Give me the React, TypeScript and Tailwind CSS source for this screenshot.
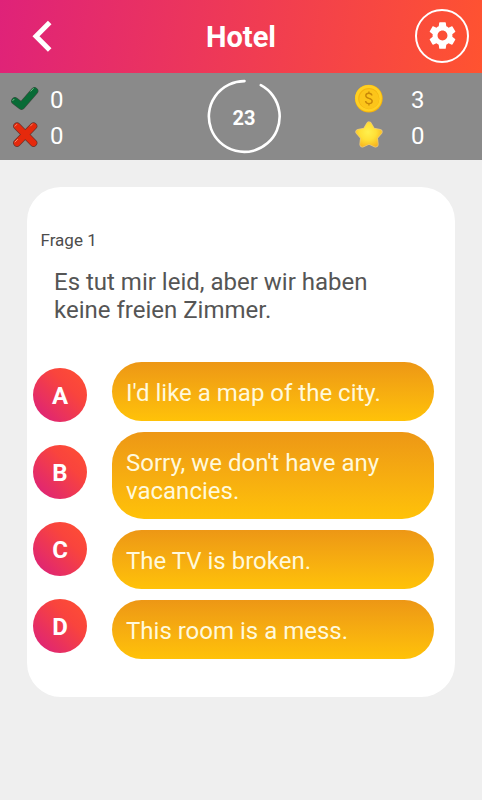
import React from "react"

import { MdSettings } from "react-icons/md"

const answers = [
  { letter: "A", text: "I'd like a map of the city." },
  { letter: "B", text: "Sorry, we don't have any vacancies." },
  { letter: "C", text: "The TV is broken." },
  { letter: "D", text: "This room is a mess." },
]

export default function App() {
  return (
    <div className="h-[800px] w-[482px] overflow-hidden bg-[#efefef] font-['Roboto',sans-serif]">
      <header className="flex h-[73px] items-center justify-between bg-linear-[100deg,#df2279,#ff5330] pr-[13px] pl-8">
        <button className="mb-[2px] h-[34px] w-[60px]" aria-label="Back">
          <svg width="22" height="34" viewBox="0 0 22 34" fill="none">
            <path d="M17.7 3.5L4 17.3L17.7 31" stroke="#fff" strokeWidth="5" />
          </svg>
        </button>
        <h1 className="mr-[25px] pt-px text-[29px] font-bold leading-9 text-white">Hotel</h1>
        <button
          className="mb-[2px] flex h-[54px] w-[54px] items-center justify-center rounded-full border-[2.5px] border-white text-white"
          aria-label="Settings"
        >
          <MdSettings size={33} />
        </button>
      </header>

      <section className="flex h-[87px] justify-between bg-[#8a8a8a] text-white">
        <div className="w-[132px] pt-2 pl-[10px]">
          <Stat icon={<CheckIcon />} value={0} gap="gap-[10px]" />
          <Stat icon={<CrossIcon />} value={0} gap="gap-[10px]" />
        </div>
        <Timer seconds={23} />
        <div className="w-[128px] pt-2">
          <Stat icon={<CoinIcon />} value={3} gap="gap-[27px]" />
          <Stat icon={<StarIcon />} value={0} gap="gap-[27px]" />
        </div>
      </section>

      <main className="mx-[27px] mt-[27px] h-[510px] rounded-[34px] bg-white pt-[43px]">
        <p className="pl-[13.5px] text-[17px] leading-5 text-[#4c4c4c]">Frage 1</p>
        <p className="mt-[18px] w-[360px] pl-[27px] text-2xl leading-7 text-[#555]">
          Es tut mir leid, aber wir haben keine freien Zimmer.
        </p>

        <div className="mt-[38px] flex pl-[6px]">
          <div className="flex flex-col gap-[23px] pt-[6px]">
            {answers.map(({ letter }) => (
              <span
                key={letter}
                className="flex h-[54px] w-[54px] items-center justify-center rounded-full bg-linear-[45deg,#d91e80,#f9443d_65%,#ff5033] pt-[2px] text-2xl font-bold text-white"
              >
                {letter}
              </span>
            ))}
          </div>
          <div className="ml-[25px] flex w-[322px] flex-col gap-[11px]">
            {answers.map(({ letter, text }) => (
              <button
                key={letter}
                className="rounded-[32px] bg-linear-to-b from-[#ed9715] to-[#ffc208] pt-[17px] pr-10 pb-[14px] pl-[14px] text-left text-2xl leading-7 text-[#fff9dc]"
              >
                {text}
              </button>
            ))}
          </div>
        </div>
      </main>
    </div>
  )
}

function Stat({ icon, value, gap }: { icon: React.ReactNode; value: number; gap: string }) {
  return (
    <div className={`flex h-9 items-center ${gap}`}>
      {icon}
      <span className="pt-[2px] text-2xl leading-7">{value}</span>
    </div>
  )
}

function Timer({ seconds }: { seconds: number }) {
  return (
    <div className="mt-[6px] ml-[2px] grid h-[75px] w-[75px] place-items-center">
      <svg className="col-start-1 row-start-1" width="75" height="75" viewBox="0 0 75 75" fill="none">
        <path
          d="M53.8 6.2A35.4 35.4 0 1 1 37.5 2.1"
          stroke="#fff"
          strokeWidth="2.6"
          strokeLinecap="round"
        />
      </svg>
      <span className="col-start-1 row-start-1 pt-[2px] text-xl font-bold leading-6">{seconds}</span>
    </div>
  )
}

function CheckIcon() {
  return (
    <svg width="30" height="30" viewBox="0 0 30 30" fill="none" strokeLinecap="round" strokeLinejoin="round">
      <path d="M5 17L11.5 22L24.5 7" stroke="#3b4c3f" strokeWidth="7.6" />
      <path d="M5 17L11.5 22L24.5 7" stroke="#086b36" strokeWidth="6.4" />
      <path d="M2.8 16.6L4 15.3M20.7 7.2L23.3 4.5" stroke="#7ebd87" strokeWidth="1" />
    </svg>
  )
}

function CrossIcon() {
  return (
    <svg width="30" height="30" viewBox="0 0 30 30" fill="none" strokeLinecap="round">
      <path d="M7 6.2L23.5 23M23.5 6.2L7 23" stroke="#6b332c" strokeWidth="7.6" />
      <path d="M7 6.2L23.5 23M23.5 6.2L7 23" stroke="#e5290c" strokeWidth="6.2" />
      <path d="M5 6.2L6.8 4.4M20.5 6L22.4 4M5 22L7.6 19.4" stroke="#f58a6c" strokeWidth="1" />
    </svg>
  )
}

function CoinIcon() {
  return (
    <svg width="30" height="30" viewBox="0 0 30 30">
      <circle cx="14.8" cy="14.6" r="13.9" fill="#f5b30c" />
      <circle cx="14.5" cy="14.2" r="13.3" fill="#ffd023" />
      <circle cx="14.8" cy="14.6" r="10.6" fill="#f5b50f" />
      <circle cx="15.1" cy="15" r="10" fill="#fcc51a" />
      <path
        d="M17.9 11.5C17.6 9.8 16.4 9.2 14.9 9.2C13.1 9.2 11.8 10.2 11.8 11.7C11.8 15.2 18.2 13.4 18.2 17.1C18.2 18.7 16.8 19.7 15 19.7C13.1 19.7 11.8 18.7 11.6 17M14.9 7.5V9.2M14.9 19.7V21.6"
        fill="none"
        stroke="#c98808"
        strokeWidth="1.4"
      />
    </svg>
  )
}

function StarIcon() {
  const points = "15,4.4 18.6,10.5 25.6,11.9 20.9,17.3 21.6,24.4 15,21.6 8.4,24.4 9.1,17.3 4.4,11.9 11.4,10.5"
  return (
    <svg width="30" height="30" viewBox="0 0 30 30" strokeLinejoin="round">
      <defs>
        <radialGradient id="star" gradientUnits="userSpaceOnUse" cx="14" cy="12" r="16">
          <stop offset="0" stopColor="#fff04e" />
          <stop offset="0.5" stopColor="#ffe037" />
          <stop offset="1" stopColor="#f7b41f" />
        </radialGradient>
      </defs>
      <polygon points={points} fill="#e9c77b" stroke="#e9c77b" strokeWidth="6" />
      <polygon points={points} fill="url(#star)" stroke="url(#star)" strokeWidth="4.6" />
    </svg>
  )
}
